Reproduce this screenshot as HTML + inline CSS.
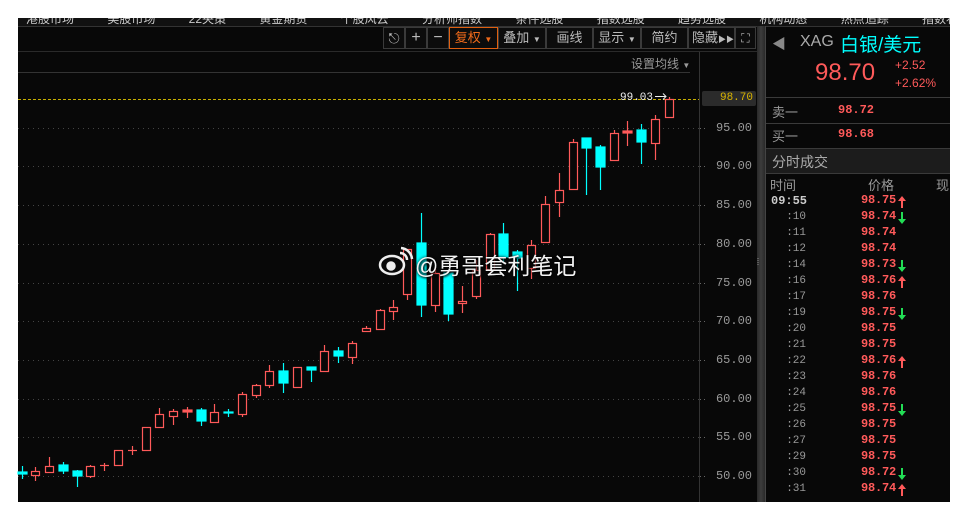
<!DOCTYPE html>
<html><head><meta charset="utf-8"><style>
body{margin:0;width:968px;height:520px;background:#fff;position:relative;overflow:hidden;font-family:"Liberation Sans","Noto Sans CJK SC",sans-serif}
.a{position:absolute;white-space:nowrap}
#frame{position:absolute;left:18px;top:18px;width:932px;height:484px;background:#080808;overflow:hidden}
.btn{position:absolute;top:27px;height:22px;border:1px solid #3a3a3a;box-sizing:border-box;color:#bbb;font-size:13px;line-height:20px;text-align:center;background:#0c0c0c;white-space:nowrap;overflow:hidden}
.ax{position:absolute;left:700px;width:52px;text-align:right;color:#9a9a9a;font:12px "Liberation Mono",monospace}
.t{position:absolute;left:770px;width:36px;text-align:right;color:#999;font:11px "Liberation Mono",monospace}
.p{position:absolute;left:861px;color:#ff5a5a;font:bold 12px "Liberation Mono",monospace;letter-spacing:-0.2px}
</style></head><body>
<div id="frame"></div>
<div class="a" style="left:18px;top:18px;width:932px;height:8px;overflow:hidden;background:#111;border-bottom:1px solid #333">
<div class="a" style="top:-8px;left:8px;color:#ccc;font-size:12px;word-spacing:30px">港股市场 美股市场 22央策 黄金期货 个股风云 分析师指数 条件选股 指数选股 趋势选股 机构动态 热点追踪 指数状态 机构推荐</div></div>
<div class="btn" style="left:383px;width:22px;font-size:14px">&#9099;</div>
<div class="btn" style="left:405px;width:22px;font-size:16px">+</div>
<div class="btn" style="left:427px;width:22px;font-size:16px">−</div>
<div class="btn" style="left:449px;width:49px;border-color:#e06010;color:#f06a1a">复权 <span style="font-size:8px">▼</span></div>
<div class="btn" style="left:498px;width:48px">叠加 <span style="font-size:8px">▼</span></div>
<div class="btn" style="left:546px;width:47px">画线</div>
<div class="btn" style="left:593px;width:48px">显示 <span style="font-size:8px">▼</span></div>
<div class="btn" style="left:641px;width:47px">简约</div>
<div class="btn" style="left:688px;width:47px;text-align:left;padding-left:3px">隐藏<span style="font-size:8px">▶▶</span></div>
<div class="btn" style="left:735px;width:21px;font-size:12px">⛶</div>
<div class="a" style="left:18px;top:51px;width:740px;height:1px;background:#2a2a2a"></div>
<div class="a" style="left:631px;top:55px;color:#999;font-size:12px">设置均线 <span style="font-size:8px">▼</span></div>
<div class="a" style="left:18px;top:72px;width:672px;height:1px;background:#333"></div>
<div class="a" style="left:699px;top:52px;width:1px;height:450px;background:#333"></div>
<div class="a" style="left:757px;top:26px;width:8px;height:476px;background:linear-gradient(90deg,#2a2a2a,#3c3c3c,#2a2a2a)"></div>
<div class="a" style="left:765px;top:26px;width:1px;height:476px;background:#444"></div>
<svg class="a" style="left:0;top:0" width="968" height="520" viewBox="0 0 968 520">
<g stroke="#444" stroke-dasharray="1 4" stroke-width="1">
<line x1="18" y1="128.5" x2="699" y2="128.5"/><line x1="18" y1="166.5" x2="699" y2="166.5"/><line x1="18" y1="205.5" x2="699" y2="205.5"/><line x1="18" y1="244.5" x2="699" y2="244.5"/><line x1="18" y1="283.5" x2="699" y2="283.5"/><line x1="18" y1="321.5" x2="699" y2="321.5"/><line x1="18" y1="360.5" x2="699" y2="360.5"/><line x1="18" y1="399.5" x2="699" y2="399.5"/><line x1="18" y1="437.5" x2="699" y2="437.5"/><line x1="18" y1="476.5" x2="699" y2="476.5"/>
</g>
<line x1="18" y1="99.5" x2="699" y2="99.5" stroke="#c8b000" stroke-dasharray="3 2"/>
<text x="620" y="100" fill="#eee" font-family="Liberation Mono" font-size="11">99.03</text>
<path d="M655 96.5h11m-3-3l3 3-3 3" stroke="#eee" fill="none"/>
<g stroke-width="1.2">
<g stroke="#00ffff" fill="#00ffff">
<line x1="22.5" y1="466" x2="22.5" y2="479"/><rect x="18" y="472" width="9" height="2"/>
<line x1="63.5" y1="462" x2="63.5" y2="474"/><rect x="59" y="465" width="9" height="6"/>
<line x1="77.5" y1="470" x2="77.5" y2="487"/><rect x="73" y="471" width="9" height="5"/>
<line x1="201.5" y1="408" x2="201.5" y2="426"/><rect x="197" y="410" width="9" height="11"/>
<line x1="228.5" y1="409" x2="228.5" y2="417"/><rect x="224" y="412" width="9" height="1"/>
<line x1="283.5" y1="363" x2="283.5" y2="393"/><rect x="279" y="371" width="9" height="12"/>
<line x1="311.5" y1="367" x2="311.5" y2="382"/><rect x="307" y="367" width="9" height="3"/>
<line x1="338.5" y1="347" x2="338.5" y2="363"/><rect x="334" y="351" width="9" height="5"/>
<line x1="421.5" y1="213" x2="421.5" y2="317"/><rect x="417" y="243" width="9" height="62"/>
<line x1="448.5" y1="270" x2="448.5" y2="321"/><rect x="444" y="273" width="9" height="41"/>
<line x1="503.5" y1="223" x2="503.5" y2="262"/><rect x="499" y="234" width="9" height="23"/>
<line x1="517.5" y1="250" x2="517.5" y2="291"/><rect x="513" y="252" width="9" height="6"/>
<line x1="586.5" y1="138" x2="586.5" y2="195"/><rect x="582" y="138" width="9" height="10"/>
<line x1="600.5" y1="145" x2="600.5" y2="190"/><rect x="596" y="147" width="9" height="20"/>
<line x1="641.5" y1="124" x2="641.5" y2="164"/><rect x="637" y="130" width="9" height="12"/>
</g>
<g stroke="#ff5a5a" fill="#080808">
<line x1="35.5" y1="467" x2="35.5" y2="481"/><rect x="31.5" y="471.5" width="8" height="4"/>
<line x1="49.5" y1="457" x2="49.5" y2="473"/><rect x="45.5" y="466.5" width="8" height="6"/>
<line x1="90.5" y1="465" x2="90.5" y2="478"/><rect x="86.5" y="466.5" width="8" height="10"/>
<line x1="104.5" y1="463" x2="104.5" y2="471"/><line x1="100" y1="465.5" x2="109" y2="465.5"/>
<rect x="114.5" y="450.5" width="8" height="15"/>
<line x1="132.5" y1="446" x2="132.5" y2="455"/><line x1="128" y1="450.5" x2="137" y2="450.5"/>
<rect x="142.5" y="427.5" width="8" height="23"/>
<line x1="159.5" y1="408" x2="159.5" y2="428"/><rect x="155.5" y="414.5" width="8" height="13"/>
<line x1="173.5" y1="409" x2="173.5" y2="425"/><rect x="169.5" y="411.5" width="8" height="5"/>
<line x1="187.5" y1="407" x2="187.5" y2="418"/><rect x="183" y="410" width="9" height="2" fill="#ff5a5a"/>
<line x1="214.5" y1="404" x2="214.5" y2="423"/><rect x="210.5" y="412.5" width="8" height="10"/>
<line x1="242.5" y1="392" x2="242.5" y2="417"/><rect x="238.5" y="394.5" width="8" height="20"/>
<line x1="256.5" y1="384" x2="256.5" y2="398"/><rect x="252.5" y="385.5" width="8" height="10"/>
<line x1="269.5" y1="365" x2="269.5" y2="388"/><rect x="265.5" y="371.5" width="8" height="14"/>
<rect x="293.5" y="367.5" width="8" height="20"/>
<line x1="324.5" y1="345" x2="324.5" y2="371"/><rect x="320.5" y="351.5" width="8" height="20"/>
<line x1="352.5" y1="341" x2="352.5" y2="364"/><rect x="348.5" y="343.5" width="8" height="14"/>
<line x1="366.5" y1="326" x2="366.5" y2="332"/><rect x="362.5" y="328.5" width="8" height="3"/>
<line x1="380.5" y1="309" x2="380.5" y2="330"/><rect x="376.5" y="310.5" width="8" height="19"/>
<line x1="393.5" y1="300" x2="393.5" y2="320"/><rect x="389.5" y="307.5" width="8" height="4"/>
<line x1="407.5" y1="249" x2="407.5" y2="300"/><rect x="403.5" y="249.5" width="8" height="45"/>
<line x1="435.5" y1="267" x2="435.5" y2="312"/><rect x="431.5" y="273.5" width="8" height="32"/>
<line x1="462.5" y1="286" x2="462.5" y2="313"/><rect x="458.5" y="301.5" width="8" height="2"/>
<line x1="476.5" y1="260" x2="476.5" y2="299"/><rect x="472.5" y="270.5" width="8" height="26"/>
<line x1="490.5" y1="233" x2="490.5" y2="275"/><rect x="486.5" y="234.5" width="8" height="35"/>
<line x1="531.5" y1="240" x2="531.5" y2="279"/><rect x="527.5" y="245.5" width="8" height="23"/>
<line x1="545.5" y1="196" x2="545.5" y2="243"/><rect x="541.5" y="204.5" width="8" height="38"/>
<line x1="559.5" y1="173" x2="559.5" y2="217"/><rect x="555.5" y="190.5" width="8" height="12"/>
<line x1="573.5" y1="139" x2="573.5" y2="189"/><rect x="569.5" y="142.5" width="8" height="47"/>
<line x1="614.5" y1="130" x2="614.5" y2="160"/><rect x="610.5" y="133.5" width="8" height="27"/>
<line x1="627.5" y1="121" x2="627.5" y2="146"/><rect x="623" y="131" width="9" height="2" fill="#ff5a5a"/>
<line x1="655.5" y1="115" x2="655.5" y2="160"/><rect x="651.5" y="119.5" width="8" height="24"/>
<line x1="669.5" y1="97" x2="669.5" y2="117"/><rect x="665.5" y="99.5" width="8" height="18"/>
</g></g>
<g stroke="#666" stroke-dasharray="1 3"><line x1="700" y1="128.5" x2="707" y2="128.5"/><line x1="700" y1="166.5" x2="707" y2="166.5"/><line x1="700" y1="205.5" x2="707" y2="205.5"/><line x1="700" y1="244.5" x2="707" y2="244.5"/><line x1="700" y1="283.5" x2="707" y2="283.5"/><line x1="700" y1="321.5" x2="707" y2="321.5"/><line x1="700" y1="360.5" x2="707" y2="360.5"/><line x1="700" y1="399.5" x2="707" y2="399.5"/><line x1="700" y1="437.5" x2="707" y2="437.5"/><line x1="700" y1="476.5" x2="707" y2="476.5"/></g>
<g fill="none" stroke="#eee" stroke-width="2.5"><ellipse cx="392" cy="265" rx="12" ry="9"/><circle cx="391" cy="266" r="3.5" fill="#eee"/><path d="M400 253a7 7 0 0 1 7 7M401 248a12 12 0 0 1 11 11"/></g>
<path d="M758 258v8" stroke="#888" stroke-dasharray="1 1"/>
</svg>
<div class="a" style="left:415px;top:247px;color:#f4f4f4;font-size:23px;text-shadow:0 0 3px #000,1px 1px 2px #000">@勇哥套利笔记</div>
<div class="a" style="left:702px;top:91px;width:54px;height:15px;background:#2b2b2b;border-radius:2px;color:#d9b400;font:11px/15px 'Liberation Mono',monospace;text-align:right;box-sizing:border-box;padding-right:3px">98.70</div>
<div class="ax" style="top:121px">95.00</div><div class="ax" style="top:159px">90.00</div><div class="ax" style="top:198px">85.00</div><div class="ax" style="top:237px">80.00</div><div class="ax" style="top:276px">75.00</div><div class="ax" style="top:314px">70.00</div><div class="ax" style="top:353px">65.00</div><div class="ax" style="top:392px">60.00</div><div class="ax" style="top:430px">55.00</div><div class="ax" style="top:469px">50.00</div>
<div class="a" style="left:772px;top:34px;color:#888;font-size:14px">◀</div>
<div class="a" style="left:800px;top:33px;color:#aaa;font-size:16px">XAG</div>
<div class="a" style="left:840px;top:30px;color:#00ffff;font-size:19px">白银/美元</div>
<div class="a" style="left:815px;top:59px;color:#ff5a5a;font-size:24px">98.70</div>
<div class="a" style="left:895px;top:58px;color:#ff5a5a;font-size:12px">+2.52</div>
<div class="a" style="left:895px;top:76px;color:#ff5a5a;font-size:12px">+2.62%</div>
<div class="a" style="left:766px;top:97px;width:184px;height:1px;background:#3a3a3a"></div>
<div class="a" style="left:772px;top:102px;color:#999;font-size:13px">卖一</div>
<div class="a" style="left:838px;top:103px;color:#ff5a5a;font:bold 12px 'Liberation Mono',monospace">98.72</div>
<div class="a" style="left:766px;top:123px;width:184px;height:1px;background:#3a3a3a"></div>
<div class="a" style="left:772px;top:126px;color:#999;font-size:13px">买一</div>
<div class="a" style="left:838px;top:127px;color:#ff5a5a;font:bold 12px 'Liberation Mono',monospace">98.68</div>
<div class="a" style="left:766px;top:148px;width:184px;height:26px;background:#1c1c1c;border-top:1px solid #3a3a3a;border-bottom:1px solid #3a3a3a;box-sizing:border-box"></div>
<div class="a" style="left:772px;top:152px;color:#aaa;font-size:14px">分时成交</div>
<div class="a" style="left:770px;top:175px;color:#999;font-size:13px">时间</div>
<div class="a" style="left:868px;top:175px;color:#999;font-size:13px">价格</div>
<div class="a" style="left:936px;top:175px;color:#999;font-size:13px">现</div>
<div class="a" style="left:771px;top:194px;color:#ccc;font:bold 12px 'Liberation Mono',monospace">09:55</div>
<div class="t" style="top:211px">:10</div><div class="t" style="top:227px">:11</div><div class="t" style="top:243px">:12</div><div class="t" style="top:259px">:14</div><div class="t" style="top:275px">:16</div><div class="t" style="top:291px">:17</div><div class="t" style="top:307px">:19</div><div class="t" style="top:323px">:20</div><div class="t" style="top:339px">:21</div><div class="t" style="top:355px">:22</div><div class="t" style="top:371px">:23</div><div class="t" style="top:387px">:24</div><div class="t" style="top:403px">:25</div><div class="t" style="top:419px">:26</div><div class="t" style="top:435px">:27</div><div class="t" style="top:451px">:29</div><div class="t" style="top:467px">:30</div><div class="t" style="top:483px">:31</div>
<div class="p" style="top:193px">98.75</div><div class="p" style="top:209px">98.74</div><div class="p" style="top:225px">98.74</div><div class="p" style="top:241px">98.74</div><div class="p" style="top:257px">98.73</div><div class="p" style="top:273px">98.76</div><div class="p" style="top:289px">98.76</div><div class="p" style="top:305px">98.75</div><div class="p" style="top:321px">98.75</div><div class="p" style="top:337px">98.75</div><div class="p" style="top:353px">98.76</div><div class="p" style="top:369px">98.76</div><div class="p" style="top:385px">98.76</div><div class="p" style="top:401px">98.75</div><div class="p" style="top:417px">98.75</div><div class="p" style="top:433px">98.75</div><div class="p" style="top:449px">98.75</div><div class="p" style="top:465px">98.72</div><div class="p" style="top:481px">98.74</div>
<svg class="a" style="left:897px;top:190px" width="12" height="310" viewBox="0 190 12 310">
<g fill="#ff5a5a"><path d="M5 196l-4 5h3v7h2v-7h3z"/><path d="M5 276l-4 5h3v7h2v-7h3z"/><path d="M5 356l-4 5h3v7h2v-7h3z"/><path d="M5 484l-4 5h3v7h2v-7h3z"/></g>
<g fill="#22dd55"><path d="M4 212h2v7h3l-4 5-4-5h3z"/><path d="M4 260h2v7h3l-4 5-4-5h3z"/><path d="M4 308h2v7h3l-4 5-4-5h3z"/><path d="M4 404h2v7h3l-4 5-4-5h3z"/><path d="M4 468h2v7h3l-4 5-4-5h3z"/></g>
</svg>
</body></html>
